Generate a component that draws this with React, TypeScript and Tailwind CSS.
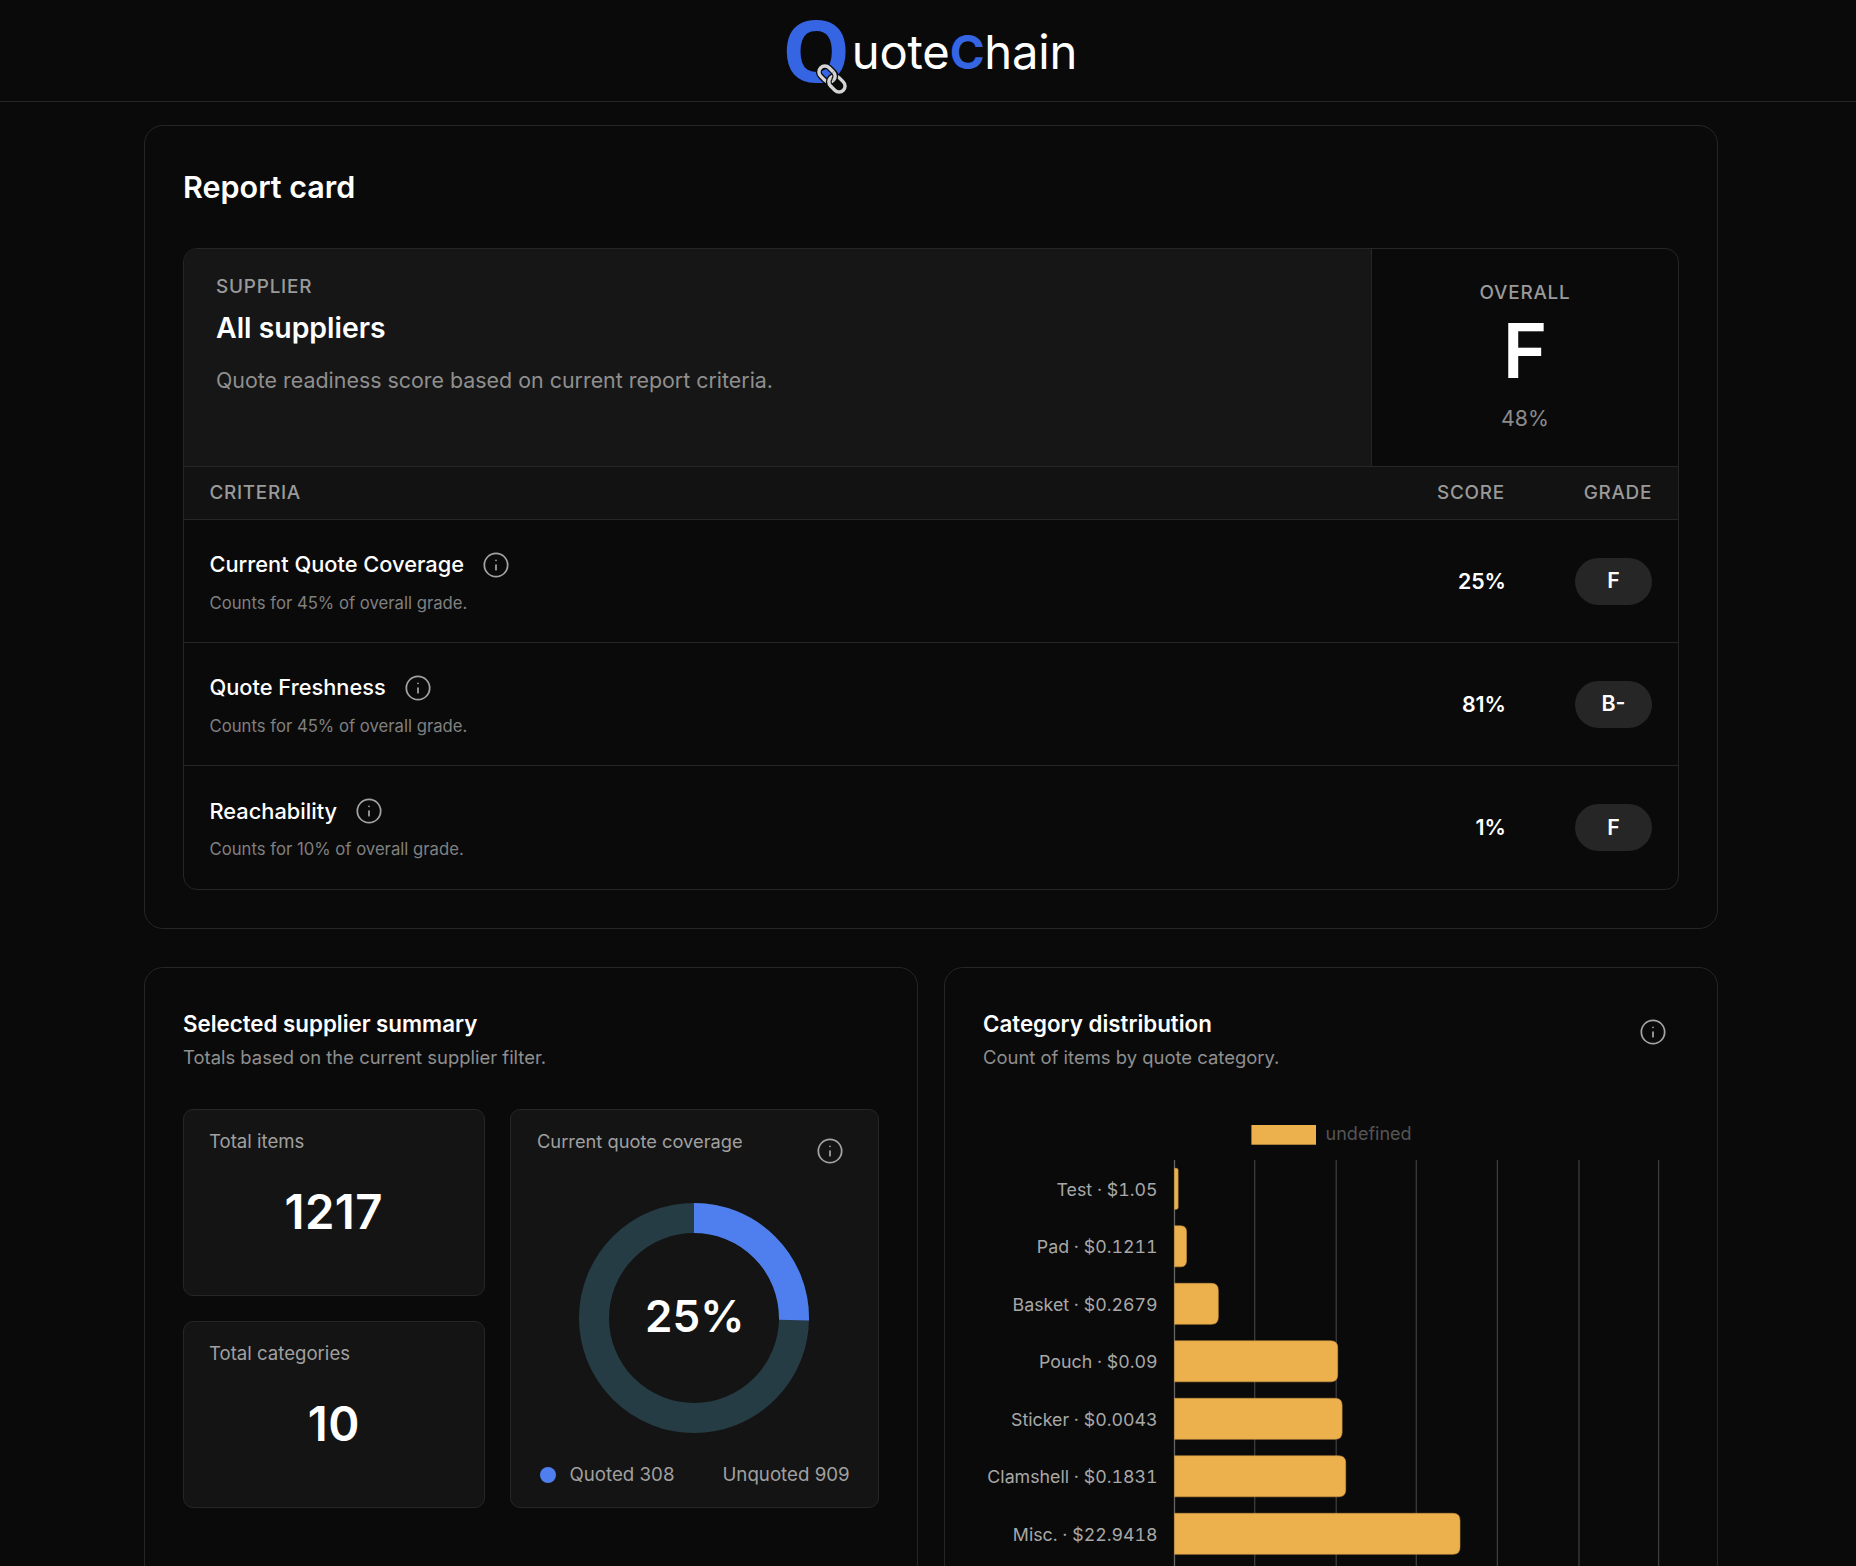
import React from "react";
import { Info } from "lucide-react";

function InfoIcon({ className = "" }: { className?: string }) {
  return <Info size={28} strokeWidth={1.5} className={"text-[#a3a3a3] shrink-0 " + className} />;
}

function Logo() {
  return (
    <div className="flex items-start justify-center h-[101px] pl-[8px]">
      <div className="relative ml-[-5px] mr-[-1px] w-[71px] h-[101px]">
        <div className="mt-[-2px] text-[86.5px] leading-[101px] font-bold font-['Open_Sans',sans-serif] text-[#3565e3]">Q</div>
        <svg className="absolute left-[31px] top-[60px]" width="38" height="38" viewBox="0 0 38 38" fill="none">
          <rect x="-12" y="23" width="50" height="15" fill="#0a0a0a" />
          <g transform="rotate(45 19 19)">
            <rect x="3" y="13" width="18" height="12" rx="6" stroke="#0a0a0a" strokeWidth="6" />
            <rect x="3" y="13" width="18" height="12" rx="6" stroke="#d4d4d4" strokeWidth="3.4" />
            <rect x="17" y="13" width="18" height="12" rx="6" stroke="#0a0a0a" strokeWidth="6" />
            <rect x="17" y="13" width="18" height="12" rx="6" stroke="#d4d4d4" strokeWidth="3.4" />
            <path d="M16 13H15A6 6 0 0 1 21 19" stroke="#0a0a0a" strokeWidth="6" />
            <path d="M15 13A6 6 0 0 1 21 19" stroke="#d4d4d4" strokeWidth="3.4" />
          </g>
        </svg>
      </div>
      <div className="text-[47.2px] leading-[103px] text-white tracking-[-0.2px]">
        uote<span className="font-bold text-[#3565e3]">C</span>hain
      </div>
    </div>
  );
}

function Row({ title, sub, score, grade, last }: { title: string; sub: string; score: string; grade: string; last?: boolean }) {
  return (
    <div className={"flex items-center h-[123px] pl-[25.5px] pr-[26px] " + (last ? "" : "border-b border-[#262626]")}>
      <div className="flex-1 mt-[3.5px]">
        <div className="flex items-center gap-[18px] h-[30px]">
          <span className="text-[21.8px] font-medium text-white">{title}</span>
          <InfoIcon />
        </div>
        <div className="mt-[10px] text-[16.7px] leading-[26px] text-[#808080]">{sub}</div>
      </div>
      <div className="pt-[1px] text-[21.3px] font-semibold text-white">{score}</div>
      <div className="ml-[69px] flex items-center justify-center w-[77px] h-[47px] rounded-full bg-[#262626] text-[21.3px] font-semibold text-white">{grade}</div>
    </div>
  );
}

const gridX = [0, 80.2, 161.7, 241.8, 322.9, 404.5, 484.1];
const bars = [
  ["Test · $1.05", 3.6],
  ["Pad · $0.1211", 12],
  ["Basket · $0.2679", 43.8],
  ["Pouch · $0.09", 163.2],
  ["Sticker · $0.0043", 167.6],
  ["Clamshell · $0.1831", 171.2],
  ["Misc. · $22.9418", 285.5],
] as const;

function barPath(x: number, y: number, w: number, h: number) {
  const r = Math.min(7, w / 2);
  return `M${x} ${y}H${x + w - r}Q${x + w} ${y} ${x + w} ${y + r}V${y + h - r}Q${x + w} ${y + h} ${x + w - r} ${y + h}H${x}Z`;
}

function Chart() {
  const x0 = 191.5;
  return (
    <svg width="696" height="460" viewBox="0 0 696 460" className="block">
      <rect x="268.4" y="10" width="64.6" height="19.7" fill="#ecb04d" />
      <text x="342.6" y="25" fontSize="18" fill="#555555" fontFamily="Inter, sans-serif">undefined</text>
      {gridX.map((g, i) => (
        <line key={i} x1={x0 + g} x2={x0 + g} y1="45" y2="460" stroke={i === 0 ? "#666666" : "#3d3d3d"} strokeWidth="1.3" />
      ))}
      {bars.map(([label, w], i) => {
        const y = 53.3 + i * 57.5;
        return (
          <g key={label}>
            <text x="174.6" y={y + 27.5} textAnchor="end" fontSize="17.8" fill="#a8a8a8" fontFamily="Inter, sans-serif" className="tabular-nums">{label}</text>
            <path d={barPath(x0, y, w, 41)} fill="#ecb04d" stroke="#c9933f" strokeWidth="0.6" />
          </g>
        );
      })}
    </svg>
  );
}

function Tile({ label, value }: { label: string; value: string }) {
  return (
    <div className="h-[187px] rounded-[10px] border border-[#262626] bg-[#141414] px-[25px] pt-[18px] text-center">
      <div className="text-left text-[18.6px] leading-[26px] text-[#a0a0a0]">{label}</div>
      <div className="mt-[30px] text-[47.3px] leading-[56px] tracking-[0.5px] font-semibold text-white">{value}</div>
    </div>
  );
}

export default function App() {
  return (
    <div className="h-[1566px] overflow-hidden bg-[#0a0a0a] text-white font-['Inter',sans-serif]">
      <header className="h-[102px] border-b border-[#262626]">
        <Logo />
      </header>
      <main className="ml-[144px] w-[1574px] pt-[23px]">
        <section className="rounded-[19px] border border-[#262626] p-[38px]">
          <h1 className="text-[30.5px] leading-[46px] font-semibold mb-[38px]">Report card</h1>
          <div className="rounded-[14px] border border-[#262626] overflow-hidden">
            <div className="flex h-[218px] border-b border-[#262626]">
              <div className="flex-1 bg-[#161616] px-[32px] pt-[26px]">
                <div className="text-[18.9px] leading-[24px] font-medium tracking-[0.8px] text-[#9a9a9a]">SUPPLIER</div>
                <div className="mt-[11px] text-[28.4px] leading-[36px] font-semibold text-white">All suppliers</div>
                <div className="mt-[19px] text-[21.4px] leading-[30px] text-[#8f8f8f]">Quote readiness score based on current report criteria.</div>
              </div>
              <div className="w-[307px] border-l border-[#262626] pt-[32px] text-center">
                <div className="text-[18.9px] leading-[24px] font-medium tracking-[0.8px] text-[#9a9a9a]">OVERALL</div>
                <div className="mt-[8px] text-[75.8px] leading-[76px] font-semibold text-white">F</div>
                <div className="mt-[14px] text-[21.3px] leading-[30px] text-[#8a8a8a]">48%</div>
              </div>
            </div>
            <div className="flex items-center h-[53px] pl-[25.5px] pr-[26px] bg-[#121212] border-b border-[#262626] text-[18.9px] font-medium tracking-[0.7px] text-[#9a9a9a]">
              <div className="flex-1">CRITERIA</div>
              <div>SCORE</div>
              <div className="ml-[79px]">GRADE</div>
            </div>
            <Row title="Current Quote Coverage" sub="Counts for 45% of overall grade." score="25%" grade="F" />
            <Row title="Quote Freshness" sub="Counts for 45% of overall grade." score="81%" grade="B-" />
            <Row title="Reachability" sub="Counts for 10% of overall grade." score="1%" grade="F" last />
          </div>
        </section>
        <div className="mt-[38px] flex gap-[26px]">
          <section className="w-[774px] h-[700px] shrink-0 rounded-[19px] border border-[#262626] p-[38px]">
            <h2 className="text-[22.3px] leading-[35px] font-semibold">Selected supplier summary</h2>
            <p className="mt-[2px] text-[18.45px] leading-[28px] text-[#8f8f8f]">Totals based on the current supplier filter.</p>
            <div className="mt-[38px] flex gap-[25px]">
              <div className="w-[301.5px] shrink-0 flex flex-col gap-[25px]">
                <Tile label="Total items" value="1217" />
                <Tile label="Total categories" value="10" />
              </div>
              <div className="flex-1 rounded-[10px] border border-[#262626] bg-[#141414]">
                <div className="flex justify-between pl-[26.5px] pr-[34.5px] pt-[18px] h-[54px]">
                  <div className="text-[18.3px] leading-[26px] text-[#a0a0a0]">Current quote coverage</div>
                  <InfoIcon className="mt-[9px]" />
                </div>
                <div className="relative mx-auto mt-[39px] w-[230px] h-[230px]">
                  <svg width="230" height="230" viewBox="0 0 230 230">
                    <circle cx="115" cy="115" r="100" fill="none" stroke="#263c44" strokeWidth="30" />
                    <circle cx="115" cy="115" r="100" fill="none" stroke="#4f7fee" strokeWidth="30" strokeDasharray="159 629" transform="rotate(-90 115 115)" />
                  </svg>
                  <div className="absolute inset-0 flex items-center justify-center pl-[1px] pb-[4px] text-[44px] font-semibold text-white">25%</div>
                </div>
                <div className="mt-[29px] flex items-center pl-[29px] text-[18.7px] leading-[26px] text-[#a0a0a0]">
                  <span className="w-[16px] h-[16px] rounded-full bg-[#4f7fee]" />
                  <span className="ml-[14px]">Quoted 308</span>
                  <span className="ml-[48px]">Unquoted 909</span>
                </div>
              </div>
            </div>
          </section>
          <section className="w-[774px] h-[700px] shrink-0 rounded-[19px] border border-[#262626] p-[38px]">
            <div className="flex items-start justify-between">
              <div>
                <h2 className="text-[22.3px] leading-[35px] font-semibold">Category distribution</h2>
                <p className="mt-[2px] text-[18.45px] leading-[28px] text-[#8f8f8f]">Count of items by quote category.</p>
              </div>
              <InfoIcon className="mt-[12px] mr-[12.5px]" />
            </div>
            <div className="mt-[44px]">
              <Chart />
            </div>
          </section>
        </div>
      </main>
    </div>
  );
}
